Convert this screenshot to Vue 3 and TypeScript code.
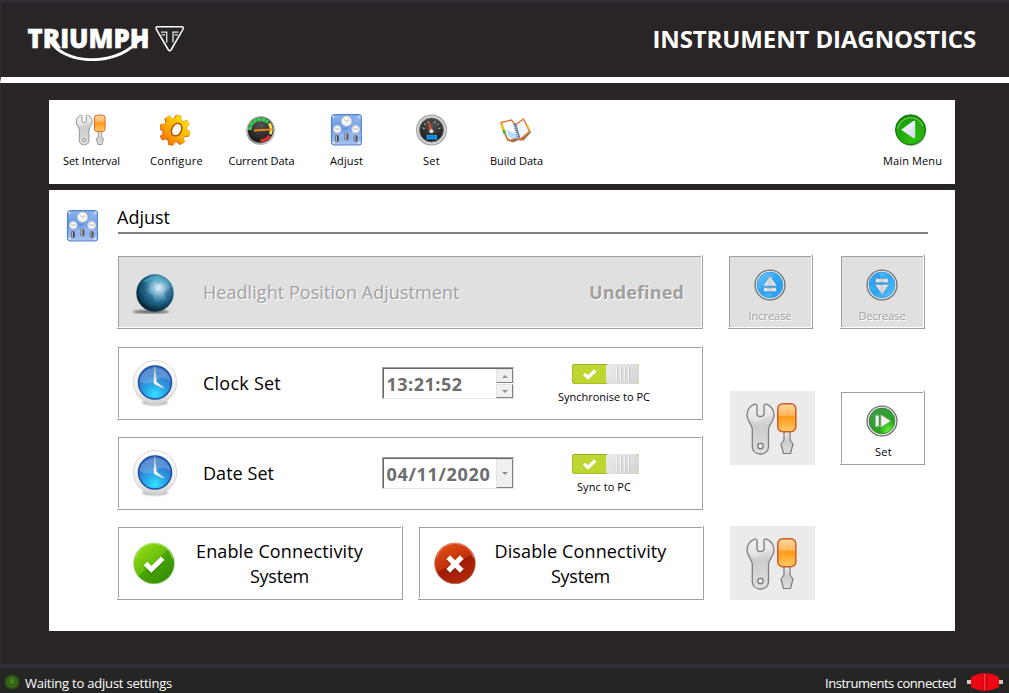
<script setup lang="ts">
import type { Directive } from 'vue'

interface Tool {
  label: string
  icon: string
  width: number
}

const tools: Tool[] = [
  { label: 'Set Interval', icon: 'tools', width: 57 },
  { label: 'Configure', icon: 'gear', width: 53 },
  { label: 'Current Data', icon: 'gauge', width: 66 },
  { label: 'Adjust', icon: 'panel', width: 33 },
  { label: 'Set', icon: 'dial', width: 17 },
  { label: 'Build Data', icon: 'book', width: 53 },
]

// Tracks a label so that it occupies the given width in pixels.
const vFit: Directive<HTMLElement, number> = {
  mounted(el, binding) {
    const count = (el.textContent ?? '').trim().length
    const natural = el.getBoundingClientRect().width
    if (count > 1) el.style.letterSpacing = `${(binding.value - natural) / count}px`
  },
}
</script>

<template>
  <div class="app">
    <svg class="defs" width="0" height="0" aria-hidden="true">
      <defs>
        <linearGradient id="steel" x1="0" y1="0" x2="0" y2="1">
          <stop offset="0" stop-color="#efefef" /><stop offset=".45" stop-color="#cdcdcd" /><stop offset="1" stop-color="#dedede" />
        </linearGradient>
        <linearGradient id="orange" x1="0" y1="0" x2="0" y2="1">
          <stop offset="0" stop-color="#ffd9a0" /><stop offset=".4" stop-color="#ffb75e" /><stop offset=".46" stop-color="#ff9a16" /><stop offset="1" stop-color="#ffcb6b" />
        </linearGradient>
        <linearGradient id="gold" x1=".8" y1="0" x2=".2" y2="1">
          <stop offset="0" stop-color="#ffee00" /><stop offset=".5" stop-color="#ffb300" /><stop offset="1" stop-color="#f26a10" />
        </linearGradient>
        <linearGradient id="board" x1="0" y1="0" x2="0" y2="1">
          <stop offset="0" stop-color="#8db5ee" /><stop offset=".5" stop-color="#6294e4" /><stop offset=".55" stop-color="#7ba4ea" /><stop offset="1" stop-color="#a9c4f4" />
        </linearGradient>
        <linearGradient id="chrome" x1="0" y1="0" x2="1" y2="1">
          <stop offset="0" stop-color="#eeeeee" /><stop offset=".5" stop-color="#8b8b8b" /><stop offset="1" stop-color="#d9d9d9" />
        </linearGradient>
        <radialGradient id="black" cx=".5" cy=".3" r=".7">
          <stop offset="0" stop-color="#555" /><stop offset="1" stop-color="#161616" />
        </radialGradient>
        <radialGradient id="globe" cx=".6" cy=".36" r=".66">
          <stop offset="0" stop-color="#e6f4fc" /><stop offset=".28" stop-color="#7fb6d3" /><stop offset=".6" stop-color="#1f668c" /><stop offset="1" stop-color="#03202f" />
        </radialGradient>
        <linearGradient id="rim" x1="0" y1="0" x2="0" y2="1">
          <stop offset="0" stop-color="#ffffff" /><stop offset=".7" stop-color="#ececec" /><stop offset="1" stop-color="#d2d2d2" />
        </linearGradient>
        <radialGradient id="face" cx=".5" cy=".86" r=".85">
          <stop offset="0" stop-color="#35e2ff" /><stop offset=".35" stop-color="#27a8ea" /><stop offset=".7" stop-color="#3179cd" /><stop offset="1" stop-color="#3c78c8" />
        </radialGradient>
        <linearGradient id="leaf" x1=".1" y1=".1" x2=".8" y2=".9">
          <stop offset="0" stop-color="#93dc12" /><stop offset=".5" stop-color="#67be0c" /><stop offset=".52" stop-color="#49a507" /><stop offset="1" stop-color="#378f05" />
        </linearGradient>
        <linearGradient id="brick" x1=".2" y1="0" x2=".7" y2="1">
          <stop offset="0" stop-color="#e25016" /><stop offset=".5" stop-color="#c4300b" /><stop offset=".53" stop-color="#a01b05" /><stop offset="1" stop-color="#b32a0b" />
        </linearGradient>
        <linearGradient id="sky" x1="0" y1="0" x2="1" y2="1">
          <stop offset="0" stop-color="#76cdfc" /><stop offset=".5" stop-color="#29a5f5" /><stop offset="1" stop-color="#62c5ff" />
        </linearGradient>
        <linearGradient id="silver" x1="0" y1="0" x2="1" y2="0">
          <stop offset="0" stop-color="#fff" /><stop offset=".45" stop-color="#cfcfcf" /><stop offset="1" stop-color="#fafafa" />
        </linearGradient>
        <radialGradient id="emerald" cx=".75" cy=".85" r=".9">
          <stop offset="0" stop-color="#62ef35" /><stop offset=".4" stop-color="#25a51b" /><stop offset="1" stop-color="#3d9c45" />
        </radialGradient>
        <radialGradient id="back" cx=".6" cy=".75" r=".8">
          <stop offset="0" stop-color="#2ec30c" /><stop offset=".7" stop-color="#21a30b" /><stop offset="1" stop-color="#128107" />
        </radialGradient>
        <linearGradient id="arrow" x1="0" y1="0" x2="1" y2="1">
          <stop offset="0" stop-color="#fff" /><stop offset="1" stop-color="#ced8f2" />
        </linearGradient>
        <filter id="soft"><feGaussianBlur stdDeviation="1" /></filter>
      </defs>

      <symbol id="i-tools" viewBox="0.5 0 52 54">
        <path d="M9 2.2C4.500 4 1.500 8 1.500 13.500C1.500 19.500 6.500 22 6.800 27V44.500C6.800 49.500 10.500 52 15 52S23 49.500 23 44.500V27C23.300 22 28.500 19.500 28.500 13.500C28.500 8 25.500 4 21 2.200C19.500 1.700 18.500 2.500 18.500 4V11.500C18.500 15.500 11.500 15.500 11.500 11.500V4C11.500 2.500 10.500 1.700 9 2.200Z" fill="url(#steel)" stroke="#7e7e7e" stroke-width="1.300" />
        <path d="M3 13C4 18 8 21 11 20C17 18 20 13 27 14C27 8 24 5 20.500 4V12C19 17 11 17 10 12V4C6 5 3 8 3 13Z" fill="#fff" opacity=".3" />
        <circle cx="15" cy="44" r="2.700" fill="#f4f4f4" stroke="#777" stroke-width="1.300" />
        <path d="M38.500 29.500H44.500V38L47.500 42L45 51.500H38L35.500 42L38.500 38Z" fill="url(#steel)" stroke="#7b7b7b" stroke-width="1.200" stroke-linejoin="round" />
        <rect x="32.300" y="1.800" width="18" height="28" rx="5" fill="url(#orange)" stroke="#cd5a20" stroke-width="1.500" />
      </symbol>

      <symbol id="i-gear" viewBox="1 0 32 32">
        <g transform="rotate(14 16 16)">
          <path transform="translate(-.8 1)" d="M13.500 1H18.500L19.300 4.700L22 5.800L25.200 3.700L28.600 7.200L26.400 10.300L27.400 13L31 13.800V18.600L27.300 19.300L26.200 22L28.300 25.200L24.800 28.500L21.600 26.300L19 27.400L18.200 31H13.500L12.700 27.300L10 26.200L6.900 28.300L3.500 24.800L5.700 21.700L4.600 19L1 18.200V13.500L4.700 12.700L5.800 10L3.700 6.900L7.200 3.500L10.300 5.700L13 4.600Z" fill="#e2541a" />
          <path d="M13.500 1H18.500L19.300 4.700L22 5.800L25.200 3.700L28.600 7.200L26.400 10.300L27.400 13L31 13.800V18.600L27.300 19.300L26.200 22L28.300 25.200L24.800 28.500L21.600 26.300L19 27.400L18.200 31H13.500L12.700 27.300L10 26.200L6.900 28.300L3.500 24.800L5.700 21.700L4.600 19L1 18.200V13.500L4.700 12.700L5.800 10L3.700 6.900L7.200 3.500L10.300 5.700L13 4.600Z" fill="url(#gold)" stroke="#e08a12" stroke-width=".6" />
          <ellipse cx="17.500" cy="15.200" rx="4.800" ry="6.600" fill="#fff" stroke="#b55306" stroke-width="1.500" transform="rotate(14 17.500 15.200)" />
        </g>
      </symbol>

      <symbol id="i-gauge" viewBox="0.5 0 32 32">
        <circle cx="16" cy="16.500" r="14.500" fill="url(#chrome)" />
        <circle cx="16" cy="16" r="12.700" fill="url(#black)" />
        <path d="M5.300 16A10.700 10.700 0 0 1 23.500 8.400" fill="none" stroke="#3cc953" stroke-width="3.600" stroke-dasharray="4 .4" />
        <path d="M24.500 9.400A10.700 10.700 0 0 1 25.800 20.200" fill="none" stroke="#f3e258" stroke-width="2.800" />
        <path d="M25 21.600A10.700 10.700 0 0 1 16 26.700" fill="none" stroke="#df3030" stroke-width="3.200" />
        <path d="M9.500 15.500L27.500 14.600V16.200L9.500 17.500Z" fill="#f78416" />
      </symbol>

      <symbol id="i-panel" viewBox="-0.5 0 32 32">
        <rect x="1" y=".7" width="30" height="30.300" rx="3" fill="url(#board)" stroke="#5480cc" stroke-width="1.200" />
        <path d="M6 23Q16 19 27 1L31 1V22Z" fill="#fff" opacity=".12" />
        <g fill="#f7f7f3" stroke="#cfcfcf" stroke-width="1">
          <circle cx="16" cy="7.200" r="5" /><circle cx="6.800" cy="15.200" r="3.800" /><circle cx="25.200" cy="15.200" r="3.800" />
        </g>
        <path d="M14 5.500L16 7.500L18.500 5.500M4.800 14L6.800 16L8.800 14M23.200 14L25.200 16L27.200 14" fill="none" stroke="#889" stroke-width=".7" />
        <g fill="#d8d8d4" stroke="#555c68" stroke-width=".8">
          <rect x="5" y="21.500" width="3" height="6" rx=".7" /><rect x="14.200" y="19" width="3.400" height="7" rx=".7" /><rect x="23.700" y="21.500" width="3" height="6" rx=".7" />
        </g>
        <path d="M7 22V27M16.500 20V25.500M25.700 22V27" stroke="#333" stroke-width="1.300" />
        <g fill="#dce6f7"><circle cx="3" cy="2.800" r="1.100" /><circle cx="29" cy="2.800" r="1.100" /><circle cx="3" cy="28.800" r="1.300" /><circle cx="29" cy="28.800" r="1.300" /></g>
      </symbol>

      <symbol id="i-dial" viewBox="-0.5 0 32 32">
        <circle cx="16" cy="16" r="15.500" fill="#9f9f9f" />
        <circle cx="16" cy="16" r="14" fill="#cbcbcb" stroke="#dedede" />
        <circle cx="16" cy="16" r="12" fill="url(#black)" stroke="#777" />
        <path d="M7 14L9 14.500M8.500 9.500L10.300 11M12 7L13 9.300M20 7L19 9.300M23.500 9.500L21.700 11M25 14L23 14.500" stroke="#ccc" stroke-width="1" />
        <path d="M13.300 8L16.800 17L14.800 17Z" fill="#f04a22" stroke="#f04a22" />
        <circle cx="15.900" cy="17.200" r="2" fill="#ddd" />
        <rect x="11" y="21" width="10.500" height="4.500" fill="#149af1" />
        <path d="M13 23.200H20" stroke="#0a65b0" stroke-width="1.500" stroke-dasharray="1.500 1" />
      </symbol>

      <symbol id="i-book" viewBox="1 0 32 32">
        <path d="M1.500 10L12 8L17 12L25 6L32 18.500L24.500 26.500L20 26L14 28.500L8 26.500Z" fill="#9c7150" />
        <path d="M2 8.500L12.500 6L16.500 11L21.500 26L16.500 24L11 26.500L8 24Z" fill="#f8fcff" stroke="#e2742c" stroke-width="1.300" />
        <path d="M16.500 11L24.500 5L30.500 17.500L21 25.500Z" fill="#eef7ff" stroke="#e2742c" stroke-width="1.300" />
        <path d="M8 16L17 20L20 24L13 24.500L9.500 23Z" fill="#b5dcfb" />
        <path d="M15.500 9.500L20 24.500" stroke="#4a7cca" stroke-width="3" stroke-dasharray="1.300 .8" />
        <path d="M2.500 10L4.500 16" stroke="#edc50b" stroke-width="2.500" /><path d="M4.500 16L6 20" stroke="#49b72a" stroke-width="2.500" />
        <path d="M28 10.500L30 15" stroke="#edc50b" stroke-width="1.500" />
      </symbol>

      <symbol id="i-back" viewBox="0.3 0 32 32">
        <circle cx="16.400" cy="16.600" r="15.300" fill="#9a9a9a" opacity=".7" />
        <circle cx="15.800" cy="15.800" r="15" fill="url(#back)" stroke="#15720b" />
        <path d="M3 15A13 13 0 0 1 28 12" fill="none" stroke="#7cd665" stroke-width="1.200" opacity=".8" />
        <path d="M6.500 15.700L18.500 7.100Q20.500 6.200 20.500 8.500V22.800Q20.500 25 18.500 24.100Z" fill="url(#arrow)" />
      </symbol>

      <symbol id="i-globe" viewBox="0 0 48 48">
        <ellipse cx="20" cy="42.800" rx="18" ry="1.800" fill="#222" opacity=".65" filter="url(#soft)" />
        <circle cx="24" cy="24" r="18.700" fill="url(#globe)" />
        <g fill="#1c5878" opacity=".38">
          <path d="M9 17L13 12L17 10L20 13L16 15L18 18L15 20L18 24L22 26L23 31L20 38L16 34L13 27L9 24Z" />
          <path d="M37 20L42 19L41 28L38 33L35 28L33 24Z" />
        </g>
        <path d="M12 12L20 7L28 7L36 12L38 17L34 15L30 13L27 15L24 11L20 11L17 14Z" fill="#4db0d0" opacity=".55" />
      </symbol>

      <symbol id="i-clock" viewBox="0 0 48 48">
        <ellipse cx="24" cy="43.500" rx="13" ry="3" fill="#777" opacity=".55" filter="url(#soft)" />
        <circle cx="24" cy="23.300" r="21.700" fill="url(#rim)" stroke="#d4d4d4" stroke-width=".9" />
        <circle cx="24" cy="23.500" r="16.500" fill="url(#face)" stroke="#1d4f9e" stroke-width="1.500" />
        <path d="M8.500 22A15.800 15.800 0 0 1 39.500 22Q31 16 24 22Q16 27 8.500 22Z" fill="#fff" opacity=".2" />
        <path d="M23.800 7.500L25.700 23L33 28.800L32 29.200L24 25.500L22.500 24Z" fill="#fafafa" stroke="#a5b0ba" stroke-width=".6" />
      </symbol>

      <symbol id="i-check" viewBox="0 0 48 48">
        <circle cx="24" cy="24.400" r="20.300" fill="url(#leaf)" stroke="#8ac667" stroke-width=".8" />
        <path d="M5.500 19A19 19 0 0 1 42.500 19" fill="none" stroke="#baf06c" stroke-width="1" opacity=".8" />
        <path d="M15 25.500L21.500 31.500L33 20.500" fill="none" stroke="#3e7010" stroke-width="5" opacity=".3" transform="translate(0 1.500)" />
        <path d="M15.500 24.500L21.300 30.300L32.700 19.300" fill="none" stroke="#fff" stroke-width="5" />
      </symbol>

      <symbol id="i-cross" viewBox="0 0 48 48">
        <circle cx="24" cy="24.400" r="20.300" fill="url(#brick)" stroke="#b96a4f" stroke-width=".8" />
        <path d="M5.500 19A19 19 0 0 1 42.500 19" fill="none" stroke="#fb8b65" stroke-width="1" opacity=".8" />
        <path d="M17 18.500L31 32.500M31 18.500L17 32.500" stroke="#650b00" stroke-width="5.500" opacity=".35" transform="translate(0 1)" />
        <path d="M17.200 18.200L30.800 31.800M30.800 18.200L17.200 31.800" stroke="#fff" stroke-width="5.300" />
      </symbol>

      <symbol id="i-up" viewBox="0 0 32 32">
        <circle cx="16" cy="16" r="15.600" fill="#707070" /><circle cx="16" cy="16" r="14.300" fill="#e7eef4" />
        <circle cx="16" cy="16" r="12.900" fill="url(#sky)" stroke="#288bd0" stroke-width=".7" />
        <path d="M16 16L28 12A13 13 0 0 1 18 29Z" fill="#148ce9" opacity=".5" />
        <path d="M16 6.500L22.800 17H9.200ZM9.800 18.800H22.200V22.500H9.800Z" fill="url(#silver)" stroke="#6e99b5" stroke-width=".6" />
      </symbol>
      <symbol id="i-down" viewBox="0 0 32 32">
        <circle cx="16" cy="16" r="15.600" fill="#707070" /><circle cx="16" cy="16" r="14.300" fill="#e7eef4" />
        <circle cx="16" cy="16" r="12.900" fill="url(#sky)" stroke="#288bd0" stroke-width=".7" />
        <path d="M16 16L3 18A13 13 0 0 1 13 3Z" fill="#148ce9" opacity=".5" />
        <path d="M16 26L22.800 15.500H9.200ZM9.800 9.700H22.200V13.400H9.800Z" fill="url(#silver)" stroke="#6e99b5" stroke-width=".6" />
      </symbol>
      <symbol id="i-play" viewBox="0 0 32 32">
        <circle cx="16" cy="16" r="15.600" fill="#707070" /><circle cx="16" cy="16" r="14.300" fill="#eee" />
        <circle cx="16" cy="16" r="12.900" fill="url(#emerald)" stroke="#2d7a2d" stroke-width=".7" />
        <path d="M9.300 10.200H13V21.800H9.300ZM14.800 9.500L25 16L14.800 22.500Z" fill="#f2f2f2" stroke="#6c9b6c" stroke-width=".6" />
      </symbol>
    </svg>

    <header class="header">
      <svg class="logo" width="160" height="40" viewBox="0 0 160 40" aria-label="Triumph">
        <text class="logo-word" x="0.500" y="26.700" textLength="122" lengthAdjust="spacingAndGlyphs">TRIUMPH</text>
        <path d="M23.500 20C36 42.500 86 46.500 109 22Q114 17 121 16.500" fill="none" stroke="#fff" stroke-width="2.900" />
        <path d="M130.500 5.700H154.500Q157 5.700 156 8.300L144.300 28.500Q142.700 31 141.100 28.500L129.400 8.300Q128.300 5.700 130.500 5.700Z" fill="none" stroke="#fff" stroke-width="1.500" />
        <path d="M134 11.200H139.700V21.500M134.500 13.800H138M151.500 11.200H146V21.500M151 13.800H147.500" fill="none" stroke="#e6e6e6" stroke-width="1.300" />
      </svg>
      <h1 class="title"><span v-fit="323.5">INSTRUMENT DIAGNOSTICS</span></h1>
    </header>

    <main class="content">
      <nav class="toolbar">
        <button v-for="t in tools" :key="t.label" class="tool">
          <svg class="i32"><use :href="'#i-' + t.icon" /></svg>
          <span v-fit="t.width">{{ t.label }}</span>
        </button>
        <button class="tool back">
          <svg class="i32"><use href="#i-back" /></svg>
          <span v-fit="59">Main Menu</span>
        </button>
      </nav>

      <section class="sheet">
        <svg class="i32 sheet-icon"><use href="#i-panel" /></svg>
        <h2 class="heading"><span v-fit="53">Adjust</span></h2>

        <div class="grid">
          <div class="box wide">
            <div class="face disabled">
              <svg class="i48"><use href="#i-globe" /></svg>
              <span class="name"><span v-fit="256.5">Headlight Position Adjustment</span></span>
              <b class="state"><span v-fit="95">Undefined</span></b>
            </div>
          </div>
          <div class="box small">
            <div class="face disabled action">
              <svg class="i32"><use href="#i-up" /></svg>
              <span v-fit="43">Increase</span>
            </div>
          </div>
          <div class="box small">
            <div class="face disabled action">
              <svg class="i32"><use href="#i-down" /></svg>
              <span v-fit="47">Decrease</span>
            </div>
          </div>

          <div class="box wide">
            <div class="face">
              <svg class="i48"><use href="#i-clock" /></svg>
              <span class="name"><span v-fit="78">Clock Set</span></span>
              <div class="field">
                <b v-fit="76">13:21:52</b>
                <div class="spin"><i><em class="up"></em></i><i><em></em></i></div>
              </div>
              <div class="sync">
                <div class="toggle">
                  <svg width="34" height="20"><path d="M12 9.800L16 13.500L23.300 6.500" fill="none" stroke="#fff" stroke-width="3.200" /></svg>
                  <div class="knob"></div>
                </div>
                <span v-fit="92">Synchronise to PC</span>
              </div>
            </div>
          </div>
          <div class="tile"><svg width="52" height="54"><use href="#i-tools" /></svg></div>
          <div class="box small set">
            <div class="face action">
              <svg class="i32"><use href="#i-play" /></svg>
              <span v-fit="17">Set</span>
            </div>
          </div>

          <div class="box wide">
            <div class="face">
              <svg class="i48"><use href="#i-clock" /></svg>
              <span class="name"><span v-fit="71">Date Set</span></span>
              <div class="field">
                <b v-fit="104">04/11/2020</b>
                <div class="spin drop"><i><em></em></i></div>
              </div>
              <div class="sync">
                <div class="toggle">
                  <svg width="34" height="20"><path d="M12 9.800L16 13.500L23.300 6.500" fill="none" stroke="#fff" stroke-width="3.200" /></svg>
                  <div class="knob"></div>
                </div>
                <span v-fit="54">Sync to PC</span>
              </div>
            </div>
          </div>

          <div class="pair">
            <div class="box">
              <div class="face choice">
                <svg class="i48"><use href="#i-check" /></svg>
                <div class="lines"><span v-fit="167">Enable Connectivity</span><span v-fit="59">System</span></div>
              </div>
            </div>
            <div class="box">
              <div class="face choice">
                <svg class="i48"><use href="#i-cross" /></svg>
                <div class="lines"><span v-fit="172">Disable Connectivity</span><span v-fit="59">System</span></div>
              </div>
            </div>
          </div>
          <div class="tile last"><svg width="52" height="54"><use href="#i-tools" /></svg></div>
        </div>
      </section>
    </main>

    <footer class="status">
      <svg width="16" height="16" viewBox="0 0 16 16">
        <circle cx="8" cy="8" r="7.500" fill="#2b4a16" /><circle cx="8" cy="8" r="6" fill="#34661a" /><ellipse cx="8" cy="7" rx="2" ry="3" fill="#4b8226" />
      </svg>
      <span v-fit="147">Waiting to adjust settings</span>
      <span v-fit="131" class="link">Instruments connected</span>
      <svg width="36" height="18" viewBox="0 0 36 18">
        <path d="M0 7H5V11H0ZM31 7H36V11H31Z" fill="#c9c9b5" />
        <path d="M4 4L11 1Q18 -.5 25 1L32 4V14L25 17Q18 18.500 11 17L4 14Z" fill="#ee0712" />
        <path d="M15.500 1V17M20.500 1V17" stroke="#b80a14" stroke-width="1" /><path d="M17.500 1V17" stroke="#f8404a" stroke-width="1" />
      </svg>
    </footer>
  </div>
</template>

<style>
body { margin: 0; background: #292526; }
</style>

<style scoped>
.app {
  box-sizing: border-box;
  width: 1009px;
  height: 693px;
  display: flex;
  flex-direction: column;
  overflow: hidden;
  background: #292526;
  color: #000;
  font: 11px/16px "Open Sans", "Noto Sans", sans-serif;
}
.defs { display: block; flex: none; height: 0; }
span, b { white-space: nowrap; }
.i32 { width: 32px; height: 32px; flex: none; display: block; }
.i48 { width: 48px; height: 48px; flex: none; display: block; }

.header {
  box-sizing: border-box;
  height: 83px;
  display: flex;
  justify-content: space-between;
  align-items: flex-start;
  padding: 19px 32px 0 26px;
  border-top: 2px solid #2f3037;
  border-left: 1px solid #2f3037;
  border-bottom: 6px solid #fff;
}
.logo { display: block; }
.logo-word { font: 800 26.500px "Open Sans", sans-serif; fill: #fff; stroke: #fff; stroke-width: .5px; }
.title { margin: 2px 1px 0 0; color: #fff; font-size: 24px; line-height: 32px; font-weight: 700; }

.content {
  box-sizing: border-box;
  height: 581px;
  padding: 17px 54px 0 48px;
  border-left: 1px solid #2f3037;
}
.toolbar {
  height: 84px;
  display: flex;
  background: #fff;
}
.tool {
  width: 85px;
  padding: 14px 0 0;
  border: 0;
  background: none;
  font: inherit;
  color: inherit;
  display: flex;
  flex-direction: column;
  align-items: center;
  gap: 7px;
}
.tool .i32 { margin-right: 2px; }
.back { margin-left: auto; }
.back .i32 { margin-right: 4px; }

.sheet {
  box-sizing: border-box;
  height: 441px;
  margin-top: 6px;
  padding: 13px 0 0 68px;
  background: #fff;
  position: relative;
}
.sheet-icon { position: absolute; left: 17px; top: 20px; }
.heading {
  margin: 0 27px 0 1px;
  height: 29px;
  border-bottom: 2px solid #808080;
  font-size: 18px;
  line-height: 28px;
  font-weight: 400;
}
.heading span { margin-left: -1px; }
.grid {
  margin-top: 21px;
  display: grid;
  grid-template-columns: 586px 87px 85px;
  grid-template-rows: 75px 74px 74px 74px;
  column-gap: 25px;
  row-gap: 16px;
}
.grid > .small { justify-self: start; }
.wide { grid-column: 1; }
.box {
  box-sizing: border-box;
  height: 74px;
  padding: 1px;
  border-right: 1px solid #a0a0a0;
  border-bottom: 1px solid #a0a0a0;
}
.small { width: 85px; }
.face {
  box-sizing: border-box;
  height: 71px;
  display: flex;
  align-items: center;
  padding-left: 12px;
  border-top: 1px solid #a0a0a0;
  border-left: 1px solid #a0a0a0;
}
.disabled { background: #e0e0e0; color: #a0a0a0; text-shadow: 1px 1px 0 #fff; }
.disabled .i48 { margin-top: 1px; }
.name { width: 179px; margin-left: 24px; font-size: 18px; line-height: 24px; }
.state { margin-left: auto; margin-right: 17px; font-size: 18px; line-height: 24px; }
.action { flex-direction: column; padding: 12px 1px 0 0; gap: 7px; }
.set .action { padding: 12px 0 0 2px; }
.set .action .i32 { margin-right: 3px; }

.field {
  box-sizing: border-box;
  width: 132px;
  height: 32px;
  display: flex;
  justify-content: space-between;
  border: 1px solid #a0a0a0;
  border-right-color: #e3e3e3;
  border-bottom-color: #e3e3e3;
  box-shadow: inset 1px 1px 0 #696969;
  padding: 1px 0 0 3.500px;
  color: #6d6d6d;
  font-size: 18px;
  line-height: 31px;
}
.spin { width: 17px; display: flex; flex-direction: column; gap: 1px; }
.spin i {
  flex: 1;
  display: flex;
  align-items: center;
  justify-content: center;
  background: #f0f0f0;
  border: 1px solid;
  border-color: #e3e3e3 #808080 #808080 #e3e3e3;
}
.spin em { border: 3px solid transparent; border-top-color: #909090; border-bottom: 0; }
.spin em.up { border-bottom: 3px solid #909090; border-top: 0; }
.sync { width: 92px; margin-left: 44px; display: flex; flex-direction: column; align-items: center; gap: 5px; padding-top: 2px; }
.toggle {
  width: 67px;
  height: 20px;
  margin-left: 3px;
  display: flex;
  border-radius: 3px;
  overflow: hidden;
  background: #bfd630;
  box-shadow: inset 0 1px 0 #9aac28, inset 1px -1px 0 #a9bd2c;
}
.knob {
  width: 33px;
  border-radius: 3px;
  background:
    repeating-linear-gradient(90deg, #f6f6f6 0 1px, #c9c9c9 1px 2px, transparent 2px 4px) 10px 3px / 15px 14px no-repeat,
    linear-gradient(135deg, #ececec, #d2d2d2);
}

.tile {
  width: 85px;
  height: 74px;
  display: flex;
  align-items: center;
  justify-content: center;
  background: #ebebeb;
}
.tile svg { margin-bottom: -1px; margin-right: 1px; }
.grid > .tile { grid-column: 2; grid-row: 2 / span 2; align-self: center; justify-self: end; }
.grid > .set { grid-column: 3; grid-row: 2 / span 2; align-self: center; }
.grid > .last { grid-row: 4; }
.pair { grid-column: 1; display: flex; gap: 15px; width: 587px; }
.pair .box { width: 286px; }
.choice { padding-left: 11px; }
.lines { flex: 1; display: flex; flex-direction: column; align-items: center; padding: 1px 20px 0 0; font-size: 18px; line-height: 25px; }

.status {
  box-sizing: border-box;
  height: 29px;
  display: flex;
  align-items: center;
  padding: 2px 6px 0 4px;
  border-top: 4px solid #2f3037;
  background: #252524;
  color: #fff;
  font-size: 13px;
}
.status > span { margin-left: 5px; padding-top: 2px; }
.status > .link { margin-left: auto; margin-right: 11px; }
</style>
